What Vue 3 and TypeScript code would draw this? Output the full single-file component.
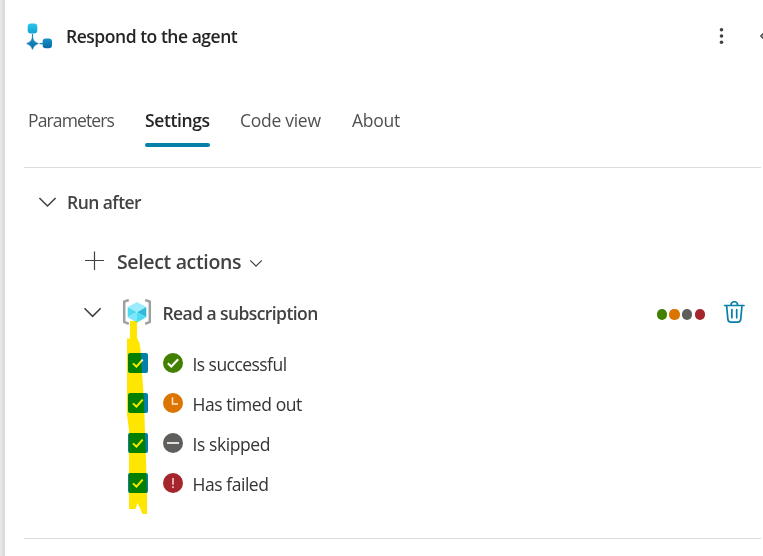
<script setup lang="ts">
type Status = 'success' | 'timeout' | 'skipped' | 'failed'

interface Condition {
  status: Status
  label: string
  cls: string
}

const tabs: { label: string; cls: string; active?: boolean }[] = [
  { label: 'Parameters', cls: 't-param' },
  { label: 'Settings', cls: 't-settings', active: true },
  { label: 'Code view', cls: 't-code' },
  { label: 'About', cls: 't-about' },
]

const conditions: Condition[] = [
  { status: 'success', label: 'Is successful', cls: 'c-success' },
  { status: 'timeout', label: 'Has timed out', cls: 'c-timeout' },
  { status: 'skipped', label: 'Is skipped', cls: 'c-skipped' },
  { status: 'failed', label: 'Has failed', cls: 'c-failed' },
]
</script>

<template>
  <main class="panel">
    <header class="header">
      <svg class="logo" width="28" height="28" viewBox="0 0 28 28">
        <defs>
          <linearGradient id="g1" x1="0" y1="0" x2="0" y2="1"><stop offset="0" stop-color="#2ac4ea" /><stop offset="1" stop-color="#12a3d2" /></linearGradient>
          <linearGradient id="g2" x1="0" y1="0" x2="0" y2="1"><stop offset="0" stop-color="#168fc5" /><stop offset="1" stop-color="#086ba5" /></linearGradient>
        </defs>
        <path d="M8.5 11v5M15.500 20.6h4" stroke="#1b8fc0" stroke-width="1.2" />
        <rect x="3.7" y="0.6" width="9.6" height="9.8" rx="3.2" fill="url(#g1)" />
        <rect x="18.6" y="15.6" width="9.4" height="9.6" rx="3.2" fill="url(#g2)" />
        <path d="M8.5 14.8Q9.700 19.200 14.3 20.6Q9.700 22 8.5 26.4Q7.300 22 2.700 20.6Q7.300 19.200 8.5 14.8Z" fill="url(#g2)" stroke="#107bb3" stroke-width=".6" />
      </svg>
      <h1 class="title"><span>Respond to the agent</span></h1>
      <button class="icon-btn more" aria-label="More">
        <svg width="6" height="18" viewBox="0 0 6 18"><g fill="#424242"><circle cx="3.500" cy="2.8" r="1.8" /><circle cx="3.500" cy="9" r="1.8" /><circle cx="3.500" cy="15.2" r="1.8" /></g></svg>
      </button>
      <button class="icon-btn collapse" aria-label="Collapse">
        <svg width="12" height="18" viewBox="0 0 12 18"><path d="M5 5L1 9L5 13" fill="none" stroke="#555" stroke-width="1.7" /></svg>
      </button>
    </header>

    <nav class="tabs">
      <button v-for="t in tabs" :key="t.label" class="tab" :class="[t.cls, { active: t.active }]"><span>{{ t.label }}</span></button>
    </nav>

    <section class="section">
      <div class="run-after">
        <svg class="chev" width="20" height="12" viewBox="0 0 20 12"><path d="M2.400 1L10.500 9L18.600 1" /></svg>
        <h2><span>Run after</span></h2>
      </div>

      <div class="select-actions">
        <svg class="plus" width="20" height="20" viewBox="0 0 20 20"><path d="M10.5 .5v18.500M1 9.5h19" /></svg>
        <span class="select-label">Select actions</span>
        <svg class="small-chev" width="14" height="9" viewBox="0 0 14 9"><path d="M1.2 1.4L7 7.2L12.8 1.4" /></svg>
      </div>

      <div class="action-row">
        <svg class="chev" width="20" height="12" viewBox="0 0 20 12"><path d="M1.5 1.300L9.600 9.300L17.700 1.300" /></svg>
        <svg class="resource" width="30" height="28" viewBox="0 0 30 28">
          <path d="M6.8 1L2.2 2.700V22.9L6.8 24.9M23.2 1L27.8 2.700V22.9L23.2 24.9" fill="none" stroke="#a0a0a0" stroke-width="2.5" />
          <path d="M15 3L24.3 8L15 13.300L5.7 8Z" fill="#9cebff" />
          <path d="M5.7 8L15 13.300L5.7 18.300Z" fill="#50daf0" />
          <path d="M24.3 8V18.300L15 13.300Z" fill="#30b9dc" />
          <path d="M5.7 18.300L15 13.300V23.500Z" fill="#80e6fa" />
          <path d="M24.3 18.300L15 23.500V13.300Z" fill="#4fdcf3" />
        </svg>
        <span class="action-name">Read a subscription</span>
        <div class="dots"><i v-for="c in conditions" :key="c.status" :class="c.status"></i></div>
        <svg class="trash" width="22" height="24" viewBox="0 0 22 24">
          <path d="M1.600 4.5h19.400M8 4.300V4a3.3 3.3 0 0 1 6.6 0V4.300M3.600 4.700l1.3 13.7a3 3 0 0 0 3 2.7h6.800a3 3 0 0 0 3-2.7L19 4.700M8.900 8.5v8.2M13.7 8.5v8.2" />
        </svg>
      </div>

      <ul class="conditions">
        <li v-for="c in conditions" :key="c.status">
          <span class="checkbox">
            <svg width="20" height="20" viewBox="0 0 20 20"><path d="M5 10.3L8.4 13.7L14.7 6.7" fill="none" stroke="#fff" stroke-width="1.9" /></svg>
          </span>
          <span class="status" :class="c.status">
            <svg width="20" height="20" viewBox="0 0 20 20">
              <path v-if="c.status === 'success'" d="M4.800 10.2L8.3 13.5L15.2 6.300" stroke="#fff" stroke-width="2" />
              <path v-else-if="c.status === 'timeout'" d="M9.5 4.200V11H15" stroke="#ffe8cf" stroke-width="1.5" />
              <path v-else-if="c.status === 'skipped'" d="M4 10H16" stroke="#e0e0e0" stroke-width="2" />
              <path v-else d="M10 5V11.8M10 13.2V15" stroke="#f0cfd2" stroke-width="1.6" />
            </svg>
          </span>
          <span class="cond-label" :class="c.cls">{{ c.label }}</span>
        </li>
      </ul>
    </section>

    <svg class="marker" width="22" height="196" viewBox="126 320 22 196">
      <path d="M130 321H137V338L139.5 343L141 353L142 373L143 385L144 403L145 433L146 460L147 497V514H142.500L140 508L137.500 503L135.500 509H129V430L127 415V338.500H130Z" fill="#ffe600" />
    </svg>
  </main>
</template>

<style>
body {
  background: #fff;
  overflow: hidden;
}
</style>

<style scoped>
* {
  box-sizing: border-box;
}
.panel {
  position: relative;
  width: 763px;
  height: 556px;
  padding-left: 24px;
  overflow: hidden;
  background: linear-gradient(90deg, #e8e8e8 0, #e5e5e5 2px, #d9d9d9 3px, #dedede 5px, #fff 5px);
  font-family: 'Open Sans', 'Noto Sans', sans-serif;
  color: #424242;
}
button {
  border: 0;
  padding: 0;
  background: none;
  font: inherit;
  color: inherit;
}
svg {
  display: block;
  flex: none;
}
.header {
  display: flex;
  align-items: center;
  height: 72px;
}
.logo {
  margin-top: 2px;
}
.title {
  flex: 1;
  margin: 0 0 1px 14px;
  font-size: 17.5px;
  font-weight: 600;
  line-height: 24px;
  letter-spacing: -0.47px;
  color: #242424;
  white-space: nowrap;
}
.more {
  margin-right: 36px;
}
.collapse {
  width: 3px;
  overflow: hidden;
}
.tabs {
  display: flex;
  height: 96px;
  margin-right: 2px;
  padding: 36px 0 0 4px;
  border-bottom: 1px solid #dcdcdc;
}
.tab {
  height: 39px;
  text-align: left;
  font-size: 17.5px;
  line-height: 24px;
  padding-bottom: 11px;
  border-bottom: 4px solid transparent;
  white-space: nowrap;
  color: #505050;
}
.t-param { width: 86px; margin-right: 31px; letter-spacing: -0.87px; }
.t-settings { width: 65px; margin-right: 30px; letter-spacing: -0.4px; }
.t-code { width: 82px; margin-right: 30px; letter-spacing: -0.28px; }
.t-about { letter-spacing: -0.25px; }
.tab.active {
  position: relative;
  font-weight: 600;
  color: #242424;
}
.tab.active::after {
  content: '';
  position: absolute;
  left: 0;
  right: 0;
  bottom: -4px;
  height: 4px;
  border-radius: 2px;
  background: #0680a8;
}
.section {
  height: 371px;
  margin-right: 2px;
  padding-left: 13px;
  border-bottom: 1px solid #dcdcdc;
}
.run-after,
.select-actions,
.action-row,
.conditions li {
  display: flex;
  align-items: center;
  white-space: nowrap;
}
.run-after {
  height: 70px;
}
h2 {
  margin: 0 0 2px 10px;
  font-size: 17.5px;
  font-weight: 600;
  line-height: 24px;
  letter-spacing: -0.55px;
}
.chev path,
.small-chev path,
.plus path {
  fill: none;
  stroke: #424242;
  stroke-width: 1.6;
}
.plus path,
.small-chev path {
  stroke-width: 1.2;
}
.select-actions {
  height: 48px;
  padding-left: 47px;
}
.plus {
  margin-bottom: 2px;
}
.select-label {
  width: 125px;
  margin: 0 7px 2px 13px;
  font-size: 19.5px;
  font-weight: 600;
  letter-spacing: -0.35px;
}
.small-chev {
  margin-top: 3px;
}
.action-row {
  height: 54px;
  padding: 0 16px 0 46px;
}
.resource {
  margin-left: 19px;
}
.action-name {
  flex: 1;
  margin-left: 10.5px;
  font-size: 17.5px;
  font-weight: 600;
  letter-spacing: -0.58px;
}
.dots {
  display: flex;
  gap: 2.500px;
  margin: 3px 18px 0 0;
}
.dots i {
  width: 10.200px;
  height: 10.200px;
  border-radius: 50%;
}
.success { background: #428000; }
.timeout { background: #db7500; }
.skipped { background: #605e5c; }
.failed { background: #a4262c; }
.trash path {
  fill: none;
  stroke: #0680a8;
  stroke-width: 1.7;
  stroke-linecap: round;
}
.conditions {
  margin: 3px 0 0;
  padding: 0 0 0 91px;
  list-style: none;
}
.conditions li {
  height: 40px;
}
.checkbox {
  width: 20px;
  height: 20px;
  border-radius: 2px;
  background: #047fac;
}
.status {
  width: 20px;
  height: 20px;
  margin-left: 15px;
  border-radius: 50%;
}
.status path {
  fill: none;
}
.cond-label {
  margin: 1px 0 0 9.5px;
  font-size: 17.5px;
  line-height: 24px;
  color: #333;
}
.c-success { letter-spacing: -0.55px; }
.c-timeout { letter-spacing: -0.43px; }
.c-skipped { letter-spacing: -0.42px; }
.c-failed { letter-spacing: -0.45px; }
.marker {
  position: absolute;
  left: 126px;
  top: 320px;
  mix-blend-mode: darken;
  pointer-events: none;
}
</style>
